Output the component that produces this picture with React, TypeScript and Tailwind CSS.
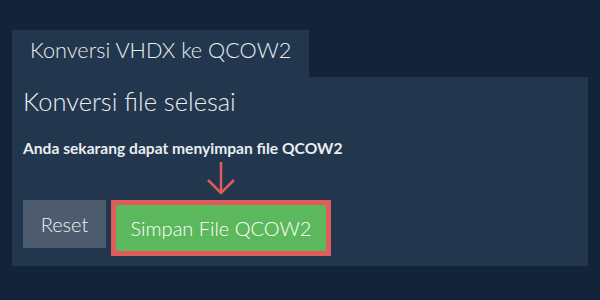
export default function App() {
  return (
    <div className="min-h-[300px] w-[600px] bg-[#13233a] px-[12px] pt-[30px] font-['Lato','Liberation_Sans',sans-serif] text-[#e9edf1]">
      {/* Tab */}
      <div className="h-[47px] w-[297px] bg-[#22374d] pl-[18px] pt-[7px] text-[21.7px] font-light leading-[1.2]">
        Konversi VHDX ke QCOW2
      </div>

      {/* Panel */}
      <div className="flex h-[189px] flex-col bg-[#22374d] px-[11px] pt-[9px]">
        <h2 className="text-[25.5px] font-light leading-[1.2]">Konversi file selesai</h2>
        <p className="mt-[22px] text-[15.6px] font-bold leading-[1.2]">
          Anda sekarang dapat menyimpan file QCOW2
        </p>

        <div className="mt-[43px] flex items-start gap-[5px]">
          <button className="h-[48px] w-[83px] bg-[#4c5b6d] text-[20px] font-light leading-[1.2] text-[#eef1f4]">
            Reset
          </button>
          <div className="relative">
            <svg
              className="absolute bottom-[calc(100%+4px)] left-1/2 -translate-x-1/2"
              width="30"
              height="36"
              viewBox="0 0 30 36"
              fill="none"
              stroke="#e05c5c"
              strokeWidth="2.5"
            >
              <path d="M15 2 V33" />
              <path d="M2 20 L15 33 L28 20" />
            </svg>
            <div className="border-[5px] border-[#e05c5c]">
              <button className="h-[46px] w-[210px] bg-[#5cb85c] text-[20px] font-light leading-[1.2] text-white">
                Simpan File QCOW2
              </button>
            </div>
          </div>
        </div>
      </div>
    </div>
  );
}
